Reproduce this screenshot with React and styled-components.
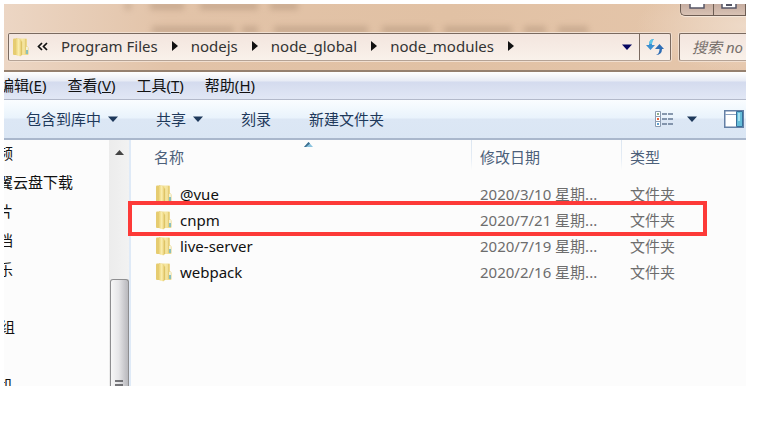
import React from "react";
import styled, { createGlobalStyle } from "styled-components";

const GlobalStyle = createGlobalStyle`
  * { box-sizing: border-box; }
  body {
    margin: 0;
    background: #fff;
    font: 15px/20px "Noto Sans", "Noto Sans CJK SC", sans-serif;
    color: #111;
  }
  button, input {
    font: inherit;
    color: inherit;
    background: none;
    border: 0;
    padding: 0;
    margin: 0;
  }
`;

const Page = styled.div`
  height: 100vh;
  padding: 4px 30px 36px 4px;
`;

const Window = styled.main`
  height: 100%;
  display: flex;
  flex-direction: column;
  overflow: hidden;
  background: #fcfcfc;
`;

const GlassFrame = styled.header`
  position: relative;
  flex: none;
  height: 68px;
  padding: 29px 0 0 4px;
  overflow: hidden;
  background:
    radial-gradient(ellipse 110px 46px at 100% 22px, #eedac8, transparent),
    linear-gradient(90deg, #ecd6c4, #e2c3a8 22%, #e1c1a4 60%, #e5c6ab);
  border-bottom: 2px solid #95806f;
`;

const Haze = styled.svg`
  position: absolute;
  left: 0;
  top: 0;
`;

const CaptionButtons = styled.div`
  position: absolute;
  right: 0;
  top: 0;
  display: flex;
  width: 66px;
  height: 12px;
  border: solid #6d5d53;
  border-width: 0 0 1px 1px;
  border-bottom-left-radius: 5px;
  background: linear-gradient(#c6ada0, #d8c2b4);
  box-shadow: 0 1px 1px #f6e8dc;
`;

const CaptionButton = styled.button`
  width: 35px;
  height: 11px;
  display: flex;
  justify-content: center;
  border-right: 1px solid #6d5d53;
`;

const AddressRow = styled.div`
  position: relative;
  display: flex;
  gap: 8px;
  height: 28px;
`;

const fieldBox = `
  border: 1px solid #7a6a60;
  border-bottom-color: #b5a396;
  border-radius: 2px;
  background: linear-gradient(#f3e5de, #f9f1ea);
  box-shadow: 0 0 0 1px #f1dfd0;
`;

const AddressBar = styled.nav`
  ${fieldBox}
  flex: 1;
  display: flex;
  align-items: center;
  padding-left: 3px;
`;

const Crumbs = styled.div`
  flex: 1;
  display: flex;
  align-items: center;
  gap: 13px;
  margin-left: 8px;
  padding-bottom: 2px;
  white-space: nowrap;
`;

const Crumb = styled.button`
  color: #333;
  line-height: 20px;
`;

const HistoryButton = styled.button`
  width: 24px;
  height: 26px;
  display: grid;
  place-items: center;
`;

const RefreshButton = styled.button`
  width: 31px;
  height: 26px;
  display: grid;
  place-items: center;
  border-left: 1px solid #7a6a60;
`;

const SearchInput = styled.input`
  && {
    ${fieldBox}
    width: 67px;
    padding-left: 12px;
    border-right: 0;
    border-radius: 2px 0 0 2px;
    outline: 0;
  }
  &::placeholder {
    color: #77706c;
    font-style: italic;
    opacity: 1;
  }
`;

const MenuBar = styled.nav`
  flex: none;
  height: 28px;
  display: flex;
  align-items: center;
  gap: 21px;
  margin-left: -5px;
  padding-bottom: 1px;
  background: linear-gradient(#fff, #e7ebf5 9px, #d4dbee 10px, #e1e7f5);
  border-bottom: 1px solid #b3b9ca;
`;

const MenuButton = styled.button`
  white-space: nowrap;
`;

const Toolbar = styled.div`
  flex: none;
  height: 40px;
  display: flex;
  align-items: center;
  gap: 38px;
  padding: 0 2px 0 22px;
  color: #1e395b;
  background: linear-gradient(#fafdff, #e9f3fc 18px, #dce7f5 19px, #dae6f4);
  border-bottom: 2px solid #a9b7cc;
`;

const ToolButton = styled.button`
  display: flex;
  align-items: center;
  gap: 7px;
  white-space: nowrap;
`;

const ViewTools = styled.div`
  display: flex;
  align-items: center;
  gap: 27px;
  margin-left: auto;
`;

const ViewButton = styled(ToolButton)`
  gap: 13px;
`;

const Body = styled.div`
  flex: 1;
  min-height: 0;
  display: flex;
`;

const NavPane = styled.aside`
  width: 105px;
  overflow: hidden;
`;

const NavList = styled.ul`
  list-style: none;
  margin: -1px 0 0 -6px;
  padding: 0;
`;

const NavItem = styled.li`
  height: 29px;
  line-height: 29px;
  white-space: nowrap;
  padding-left: ${(p) => (p.$root ? 2 : 0)}px;
`;

const ScrollBar = styled.div`
  width: 20px;
  display: flex;
  flex-direction: column;
  align-items: center;
  background: linear-gradient(90deg, #ececec, #f2f2f2);
`;

const ScrollUp = styled.button`
  height: 24px;
  display: grid;
  place-items: center;
`;

const ScrollThumb = styled.div`
  width: 19px;
  flex: 1;
  margin-top: 115px;
  display: flex;
  justify-content: center;
  align-items: flex-end;
  border: 1px solid #8e8e90;
  border-bottom: 0;
  border-radius: 3px 3px 0 0;
  background: linear-gradient(90deg, #f7f7f7, #e6e6e8 45%, #c8c8cc 80%, #b9b9bd);
`;

const FilePane = styled.section`
  position: relative;
  flex: 1;
  border-left: 2px solid #dfeaf7;
`;

const FileTable = styled.table`
  width: 100%;
  table-layout: fixed;
  border-collapse: collapse;
`;

const HeadCell = styled.th`
  position: relative;
  width: ${(p) => p.$width || "auto"};
  height: 41px;
  padding: 0 0 8px ${(p) => p.$indent || 9}px;
  text-align: left;
  font-weight: 400;
  color: #4c607a;
  background: ${(p) =>
    p.$divided
      ? "linear-gradient(#dce6f1, #e4ecf5 18px, transparent 30px) 0 0 / 1px 30px no-repeat"
      : "none"};
`;

const SortMark = styled.svg`
  position: absolute;
  left: calc(50% + 3px);
  top: 2px;
`;

const Cell = styled.td`
  height: 26px;
  padding: 0 0 0 9px;
  color: #6d6d6d;
  white-space: nowrap;
`;

const FileName = styled.div`
  display: flex;
  align-items: center;
  gap: 8px;
  padding-left: 15px;
  color: #111;
`;

const Highlight = styled.div`
  position: absolute;
  left: -3px;
  right: 39px;
  top: 61px;
  height: 35px;
  border: 4px solid #fd3a38;
  pointer-events: none;
`;

function FolderIcon() {
  return (
    <svg width="17" height="20" viewBox="0 0 17 20" aria-hidden="true">
      <defs>
        <linearGradient id="folderFront" x1="0" x2="1">
          <stop offset="0" stopColor="#ecd478" />
          <stop offset=".5" stopColor="#fbeeb0" />
          <stop offset="1" stopColor="#e3c766" />
        </linearGradient>
        <linearGradient id="folderBack" x1="0" x2="1">
          <stop offset="0" stopColor="#dfc468" />
          <stop offset=".5" stopColor="#f7e8a4" />
          <stop offset="1" stopColor="#ead27e" />
        </linearGradient>
      </defs>
      <path d="M4 1.500h10q1 0 1 1V9l1.500 1.500V17q0 1-1 1H4z" fill="url(#folderBack)" />
      <path d="M1 2.500q0-1 1-1h3V18H2q-1 0-1-1z" fill="#e6cc70" />
      <path d="M4 2.500q0-1.500 1.500-1l2.500 1q1.500.5 1.500 2V18q0 1.500-1.500 1.200L5 18.500q-1-.3-1-1.500z" fill="url(#folderFront)" />
      <path d="M9.700 4.500V18" stroke="#d3b552" strokeWidth=".7" />
      <path d="M13.500 2v15" stroke="#dcc16a" strokeWidth=".6" />
      <path d="M15 10v3" stroke="#f4f9ec" strokeWidth="1.500" />
      <path d="M15 13v4" stroke="#69b9cf" strokeWidth="1.500" />
    </svg>
  );
}

const Arrow = ({ color }) => (
  <svg width="10" height="6" viewBox="0 0 10 6" aria-hidden="true">
    <path d="M0 .5h10L5 6z" fill={color} />
  </svg>
);

const CrumbArrow = () => (
  <svg width="7" height="10" viewBox="0 0 7 10" aria-hidden="true">
    <path d="M1 0v10l6-5z" fill="#111" />
  </svg>
);

const crumbs = ["Program Files", "nodejs", "node_global", "node_modules"];
const menus = [["编辑", "E"], ["查看", "V"], ["工具", "T"], ["帮助", "H"]];
const places = [
  { name: "频" },
  { name: "翼云盘下载" },
  { name: "片" },
  { name: "档" },
  { name: "乐" },
  { name: "" },
  { name: "组", root: true },
  { name: "" },
  { name: "机" },
];
const files = [
  ["@vue", "2020/3/10 星期..."],
  ["cnpm", "2020/7/21 星期..."],
  ["live-server", "2020/7/19 星期..."],
  ["webpack", "2020/2/16 星期..."],
];

export default function App() {
  return (
    <Page>
      <GlobalStyle />
      <Window>
        <GlassFrame>
          <Haze width="620" height="40" viewBox="0 0 620 40" aria-hidden="true">
            <defs>
              <filter id="haze" x="-10%" y="-100%" width="120%" height="300%">
                <feGaussianBlur stdDeviation="3" />
              </filter>
            </defs>
            <g stroke="#977a64" strokeWidth="7" opacity=".38" filter="url(#haze)">
              <path d="M121 2h6M146 2h34M196 2h58M266 2h28" />
              <path d="M148 26h82M238 26h16M270 26h94M378 26h50M440 26h68M520 26h22M554 26h30" />
            </g>
          </Haze>
          <CaptionButtons>
            <CaptionButton aria-label="最小化">
              <svg width="16" height="5" viewBox="0 0 16 5"><path d="M1 0v4h14V0" fill="#fff" stroke="#555665" strokeWidth="1.500" /></svg>
            </CaptionButton>
            <CaptionButton aria-label="最大化">
              <svg width="16" height="5" viewBox="0 0 16 5"><path d="M1 0v4h14V0" fill="#fff" stroke="#555665" strokeWidth="1.500" /><path d="M5 1h6" stroke="#555665" strokeWidth="2" /></svg>
            </CaptionButton>
          </CaptionButtons>
          <AddressRow>
            <AddressBar aria-label="地址">
              <FolderIcon />
              <Crumbs>
                <svg width="11" height="9" viewBox="0 0 11 9" aria-hidden="true">
                  <path d="M5 1 1.500 4.500 5 8M10 1 6.500 4.500 10 8" fill="none" stroke="#111" strokeWidth="1.700" />
                </svg>
                {crumbs.map((name) => (
                  <React.Fragment key={name}>
                    <Crumb>{name}</Crumb>
                    <CrumbArrow />
                  </React.Fragment>
                ))}
              </Crumbs>
              <HistoryButton aria-label="历史记录"><Arrow color="#060660" /></HistoryButton>
              <RefreshButton aria-label="刷新">
                <svg width="18" height="18" viewBox="0 0 18 18">
                  <path d="M8 1Q3 1 3 7H0l4.500 5L9 7H6Q5.500 3 8 1z" fill="#3b8fd0" />
                  <path d="M9.500 17q4-.5 4-6H9l4.500-5L18 11h-2q0 6-6.500 6z" fill="#2e6db5" />
                  <path d="M8 1Q3 1 3 6h3Q6 3 8 1z" fill="#5ec5e6" />
                </svg>
              </RefreshButton>
            </AddressBar>
            <SearchInput aria-label="搜索" placeholder="搜索 no" />
          </AddressRow>
        </GlassFrame>

        <MenuBar>
          {menus.map(([name, key]) => (
            <MenuButton key={key}>{name}(<u>{key}</u>)</MenuButton>
          ))}
        </MenuBar>

        <Toolbar>
          <ToolButton>包含到库中<Arrow color="#1e395b" /></ToolButton>
          <ToolButton>共享<Arrow color="#1e395b" /></ToolButton>
          <ToolButton>刻录</ToolButton>
          <ToolButton>新建文件夹</ToolButton>
          <ViewTools>
            <ViewButton aria-label="更改视图">
              <svg width="19" height="17" viewBox="0 0 19 17">
                <g fill="#fff" stroke="#8b9bb0">
                  <path d="M.5.5h5v5h-5zM.5 5.500h5v5h-5zM.5 10.500h5v5h-5z" />
                </g>
                <path d="M2 3h2" stroke="#8cae8c" strokeWidth="2" />
                <path d="M2 8h2" stroke="#e6623c" strokeWidth="2" />
                <path d="M2 13h2" stroke="#5d9fd0" strokeWidth="2" />
                <path d="M7 3h5M13 3h5M7 8h5M13 8h5M7 13h5M13 13h5" stroke="#667a94" strokeWidth="1.400" />
              </svg>
              <Arrow color="#1e395b" />
            </ViewButton>
            <ToolButton aria-label="预览窗格">
              <svg width="20" height="18" viewBox="0 0 20 18">
                <path d="M.75.75h18.500v16.500H.75z" fill="#fff" stroke="#637fa5" strokeWidth="1.500" />
                <path d="M1 4.500h11" stroke="#8ba2c0" />
                <path d="M12.500 1.500h6v15h-6z" fill="#65bdd9" stroke="#376e99" />
                <path d="M14 3h2v8h-2z" fill="#a4e0ef" />
              </svg>
            </ToolButton>
          </ViewTools>
        </Toolbar>

        <Body>
          <NavPane>
            <NavList>
              {places.map((p, i) => (
                <NavItem key={i} $root={p.root}>{p.name}</NavItem>
              ))}
            </NavList>
          </NavPane>
          <ScrollBar>
            <ScrollUp aria-label="向上滚动">
              <svg width="9" height="5" viewBox="0 0 9 5"><path d="M0 5h9L4.500 0z" fill="#444" /></svg>
            </ScrollUp>
            <ScrollThumb>
              <svg width="10" height="6" viewBox="0 0 10 6" aria-hidden="true">
                <path d="M1 1h8M1 5h8" stroke="#4e4e52" strokeWidth="1.600" />
              </svg>
            </ScrollThumb>
          </ScrollBar>
          <FilePane>
            <FileTable>
              <thead>
                <tr>
                  <HeadCell $indent={23}>
                    名称
                    <SortMark width="9" height="5" viewBox="0 0 9 5" aria-hidden="true">
                      <path d="M0 5h9L4.500 0z" fill="#8ac3df" />
                      <path d="M0 5 4.500 0 6 1.500 2 5z" fill="#3e6f8f" />
                    </SortMark>
                  </HeadCell>
                  <HeadCell $width="150px" $divided>修改日期</HeadCell>
                  <HeadCell $width="125px" $divided>类型</HeadCell>
                </tr>
              </thead>
              <tbody>
                {files.map(([name, date]) => (
                  <tr key={name}>
                    <Cell><FileName><FolderIcon />{name}</FileName></Cell>
                    <Cell>{date}</Cell>
                    <Cell>文件夹</Cell>
                  </tr>
                ))}
              </tbody>
            </FileTable>
            <Highlight />
          </FilePane>
        </Body>
      </Window>
    </Page>
  );
}
